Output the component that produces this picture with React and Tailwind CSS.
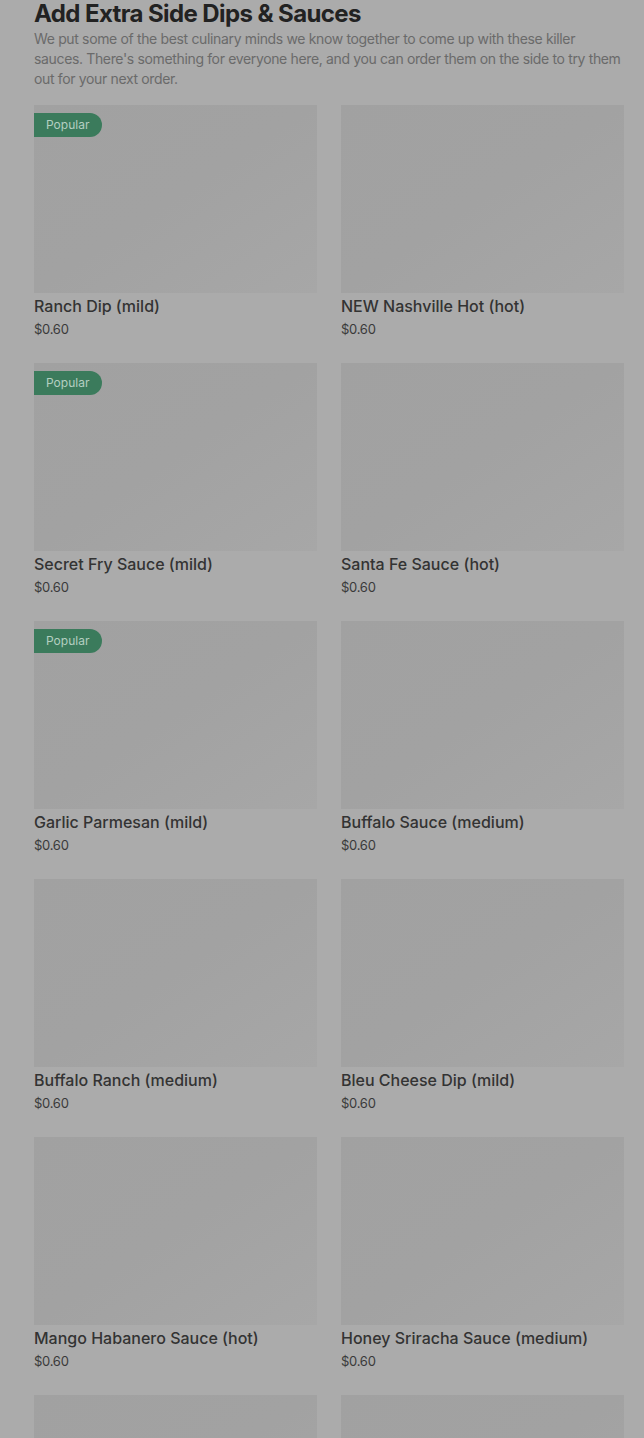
const sauces = [
  { name: 'Ranch Dip (mild)', price: '$0.60', popular: true },
  { name: 'NEW Nashville Hot (hot)', price: '$0.60' },
  { name: 'Secret Fry Sauce (mild)', price: '$0.60', popular: true },
  { name: 'Santa Fe Sauce (hot)', price: '$0.60' },
  { name: 'Garlic Parmesan (mild)', price: '$0.60', popular: true },
  { name: 'Buffalo Sauce (medium)', price: '$0.60' },
  { name: 'Buffalo Ranch (medium)', price: '$0.60' },
  { name: 'Bleu Cheese Dip (mild)', price: '$0.60' },
  { name: 'Mango Habanero Sauce (hot)', price: '$0.60' },
  { name: 'Honey Sriracha Sauce (medium)', price: '$0.60' },
  { name: 'Honey Mustard (mild)', price: '$0.60' },
  { name: 'BBQ Sauce (mild)', price: '$0.60' },
];

const SauceCard = ({ item }) => (
  <div className="flex flex-col">
    <div className="relative h-[188px] bg-gradient-to-br from-[#a1a1a1] via-[#a2a2a2] to-[#a7a7a7]">
      {item.popular && (
        <span className="absolute left-0 top-[8px] flex h-[24px] items-center rounded-r-full bg-[#3b7b5c] pl-[12px] pr-[13px] text-[12px] text-[#b4cfc1]">
          Popular
        </span>
      )}
    </div>
    <div className="mt-[3px] text-[16px] leading-5 font-medium text-[#333333]">{item.name}</div>
    <div className="mt-[3px] text-[13px] leading-5 tracking-[-0.02em] text-[#3a3a3a]">{item.price}</div>
  </div>
);

export default function App() {
  return (
    <div className="h-screen overflow-hidden bg-[#ababab] pl-[34px] pr-[20px]" style={{ fontFamily: 'Inter, "Noto Sans", sans-serif' }}>
      <h2 className="-mt-[2px] text-[24px] leading-8 font-bold tracking-[-0.025em] text-[#222222]">
        Add Extra Side Dips &amp; Sauces
      </h2>
      <p className="-mt-[1px] text-[14px] leading-5 tracking-[-0.025em] text-[#6a6a6a]">
        We put some of the best culinary minds we know together to come up with these killer sauces. There's something for everyone here, and you can order them on the side to try them out for your next order.
      </p>
      <div className="mt-[16px] grid grid-cols-2 gap-x-[24px] gap-y-[24px]">
        {sauces.map((s, i) => (
          <SauceCard key={i} item={s} />
        ))}
      </div>
    </div>
  );
}
